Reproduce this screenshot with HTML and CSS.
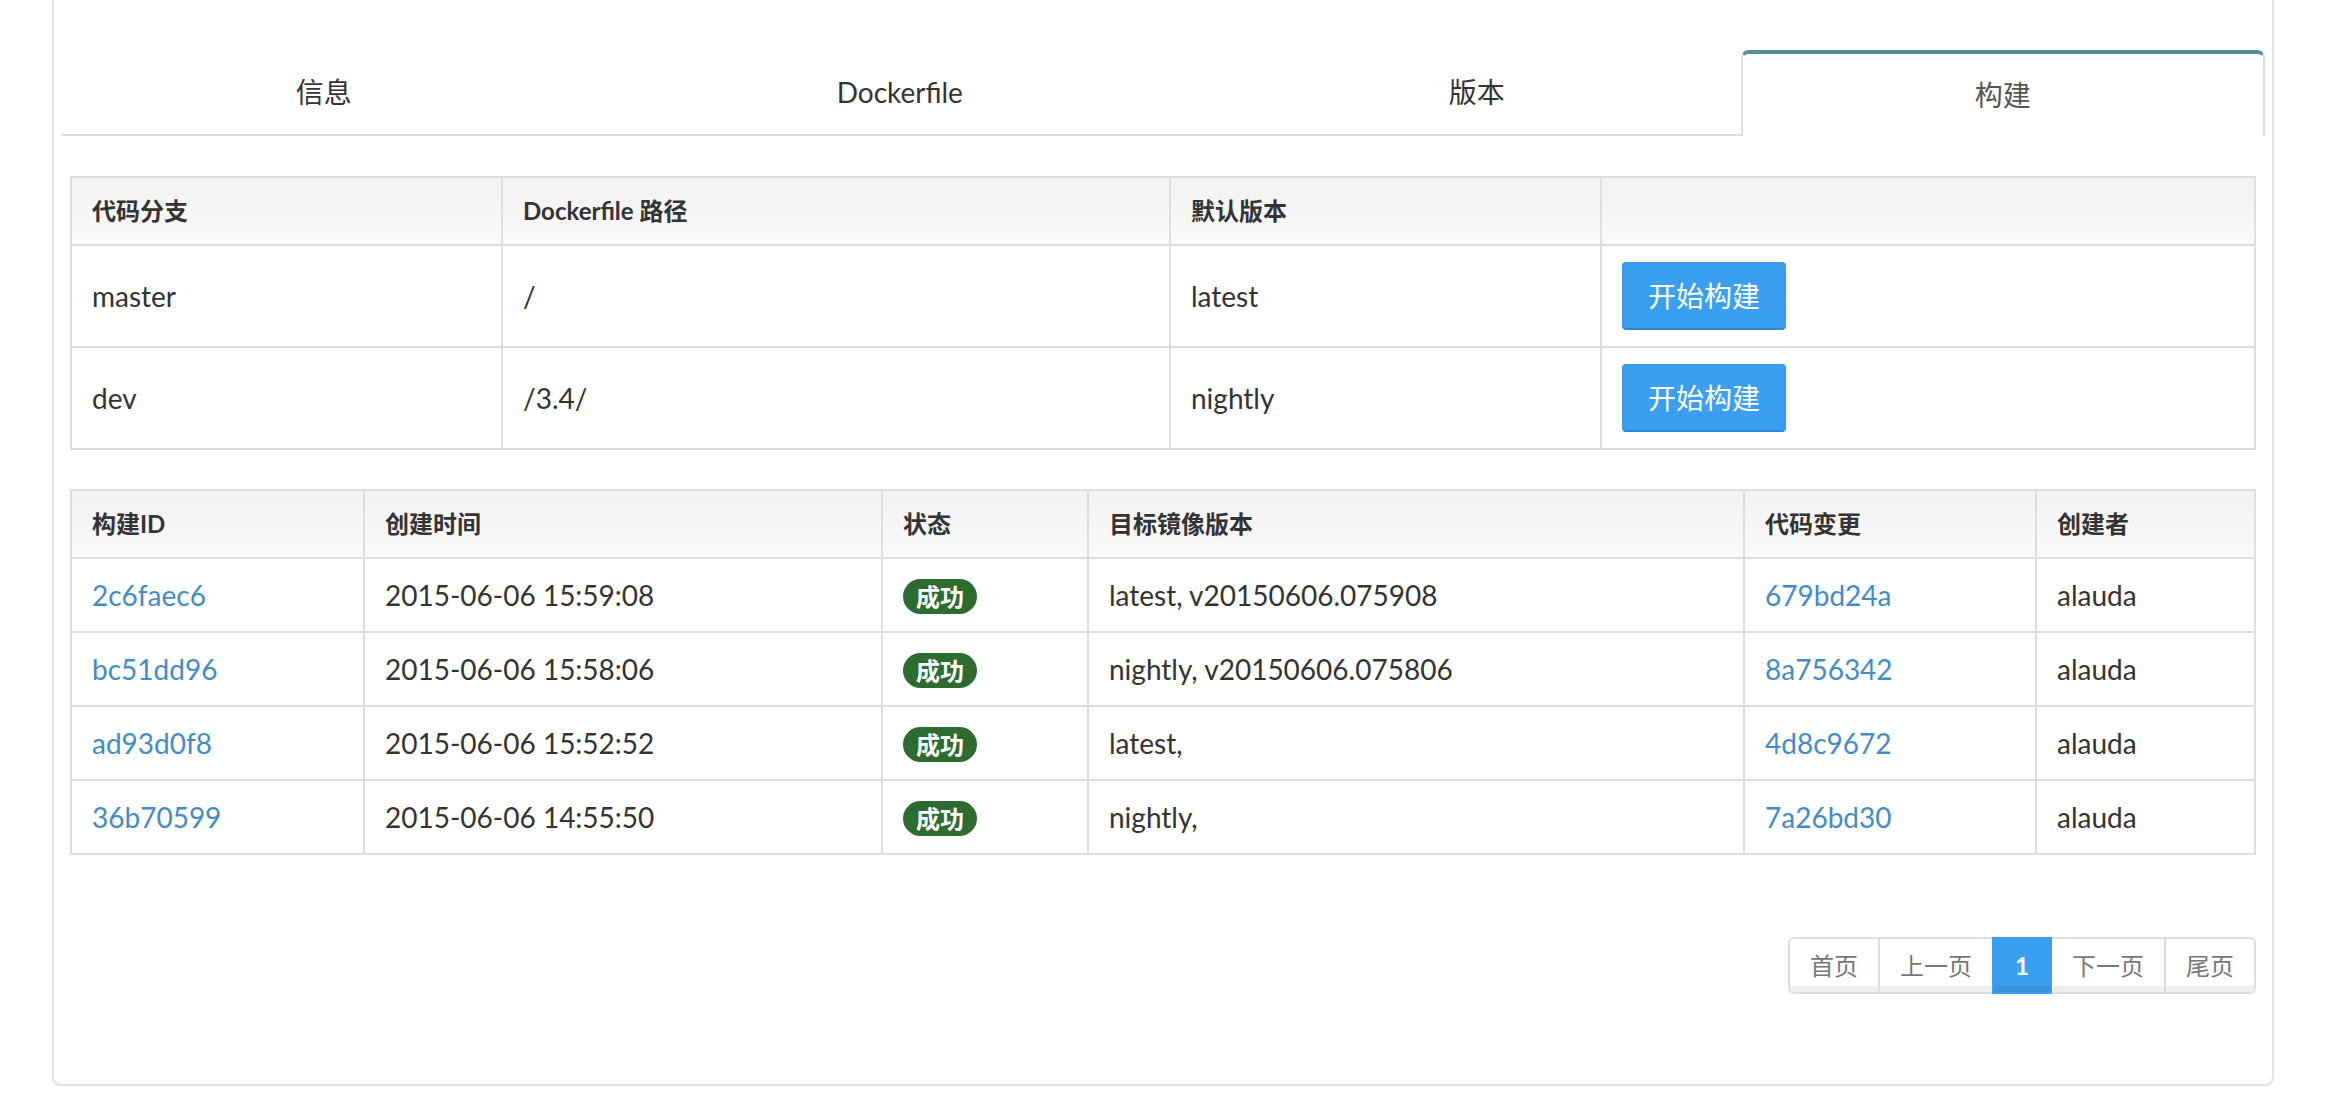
FILE: index.html
```html
<!DOCTYPE html>
<html lang="zh-CN">
<head>
<meta charset="utf-8">
<title>构建</title>
<link rel="stylesheet" href="styles.css">
</head>
<body>
<div class="card">
  <div class="tabs">
    <div class="tab">信息</div>
    <div class="tab">Dockerfile</div>
    <div class="tab">版本</div>
    <div class="tab tab-active">构建</div>
  </div>
  <div class="pane">
    <table class="tbl tbl-branches">
      <colgroup>
        <col class="c-431"><col class="c-668"><col class="c-431"><col>
      </colgroup>
      <thead>
        <tr><th>代码分支</th><th class="th-bold">Dockerfile 路径</th><th>默认版本</th><th></th></tr>
      </thead>
      <tbody>
        <tr><td>master</td><td>/</td><td>latest</td><td><button class="btn">开始构建</button></td></tr>
        <tr><td>dev</td><td>/3.4/</td><td>nightly</td><td><button class="btn">开始构建</button></td></tr>
      </tbody>
    </table>

    <table class="tbl tbl-builds">
      <colgroup>
        <col class="c-293"><col class="c-518"><col class="c-206"><col class="c-656"><col class="c-292"><col>
      </colgroup>
      <thead>
        <tr><th class="th-bold">构建ID</th><th>创建时间</th><th>状态</th><th>目标镜像版本</th><th>代码变更</th><th>创建者</th></tr>
      </thead>
      <tbody>
        <tr><td><a href="#">2c6faec6</a></td><td>2015-06-06 15:59:08</td><td><span class="badge">成功</span></td><td>latest, v20150606.075908</td><td><a href="#">679bd24a</a></td><td>alauda</td></tr>
        <tr><td><a href="#">bc51dd96</a></td><td>2015-06-06 15:58:06</td><td><span class="badge">成功</span></td><td>nightly, v20150606.075806</td><td><a href="#">8a756342</a></td><td>alauda</td></tr>
        <tr><td><a href="#">ad93d0f8</a></td><td>2015-06-06 15:52:52</td><td><span class="badge">成功</span></td><td>latest,</td><td><a href="#">4d8c9672</a></td><td>alauda</td></tr>
        <tr><td><a href="#">36b70599</a></td><td>2015-06-06 14:55:50</td><td><span class="badge">成功</span></td><td>nightly,</td><td><a href="#">7a26bd30</a></td><td>alauda</td></tr>
      </tbody>
    </table>

    <div class="pager-row">
      <ul class="pager">
        <li class="pg pg-first">首页</li>
        <li class="pg">上一页</li>
        <li class="pg pg-active">1</li>
        <li class="pg">下一页</li>
        <li class="pg pg-last">尾页</li>
      </ul>
    </div>
  </div>
</div>
</body>
</html>
```

FILE: styles.css
```css
* { box-sizing: border-box; }

html, body {
  margin: 0;
  padding: 0;
  background: #ffffff;
}

body {
  font-family: "Lato", "Noto Sans CJK SC", sans-serif;
  color: #333333;
  font-size: 28px;
  line-height: 40px;
}

.card {
  margin-left: 52px;
  width: 2222px;
  height: 1086px;
  border: 2px solid #e2e2e2;
  border-top: 0;
  border-radius: 0 0 9px 9px;
  box-shadow: 0 2px 3px rgba(0, 0, 0, 0.05);
  padding: 50px 7px 0 7px;
}

.tabs {
  display: grid;
  grid-template-columns: 525fr 626fr 527fr 524fr;
  height: 86px;
  border-bottom: 2px solid #dddddd;
}

.tab {
  display: flex;
  align-items: center;
  justify-content: center;
  font-size: 28px;
  color: #333333;
  height: 84px;
}

.tab-active {
  height: 86px;
  background: #ffffff;
  border: 2px solid #dddddd;
  border-top: 4px solid #5a8a9d;
  border-bottom: 0;
  border-radius: 8px 8px 0 0;
  color: #555555;
}

.pane {
  padding: 40px 9px 0 9px;
}

.tbl {
  width: 100%;
  border-collapse: collapse;
  table-layout: fixed;
  border: 2px solid #dddddd;
  margin-bottom: 39px;
}

.tbl th,
.tbl td {
  border: 2px solid #dddddd;
  text-align: left;
  vertical-align: middle;
  white-space: nowrap;
}

.tbl th {
  font-size: 24px;
  font-weight: 600;
  line-height: 30px;
  height: 68px;
  padding: 0 20px;
  color: #333333;
  background: linear-gradient(#f1f1f1, #f9f9f9);
}

.tbl th.th-bold {
  font-weight: 700;
}

.tbl td {
  font-size: 28px;
  line-height: 34px;
  height: 74px;
  padding: 0 20px;
}

.tbl-branches td {
  height: 102px;
}

.tbl-builds {
  margin-bottom: 82px;
}

.c-431 { width: 431px; }
.c-668 { width: 668px; }
.c-293 { width: 293px; }
.c-518 { width: 518px; }
.c-206 { width: 206px; }
.c-656 { width: 656px; }
.c-292 { width: 292px; }

.tbl a {
  color: #428bca;
  text-decoration: none;
}

.btn {
  display: block;
  font-family: "Lato", "Noto Sans CJK SC", sans-serif;
  font-size: 28px;
  line-height: 40px;
  height: 68px;
  width: 164px;
  padding: 0;
  color: #ffffff;
  background: #3b9ff1;
  border: 2px solid #3a99ea;
  border-bottom-color: #2f88d6;
  border-radius: 4px;
}

.badge {
  display: inline-block;
  height: 35px;
  line-height: 35px;
  padding: 0 13px;
  font-size: 24px;
  font-weight: 700;
  color: #ffffff;
  background: #2e6b31;
  border-radius: 18px;
  vertical-align: middle;
}

.pager-row {
  display: flex;
  justify-content: flex-end;
}

.pager {
  display: flex;
  list-style: none;
  margin: 0;
  padding: 0;
}

.pg {
  height: 57px;
  line-height: 53px;
  padding: 0 20px;
  font-size: 24px;
  color: #777777;
  background: #ffffff;
  border: 2px solid #dddddd;
  margin-left: -2px;
  box-shadow: inset 0 -6px 0 #eeeeee;
}

.pg-first {
  margin-left: 0;
  border-radius: 6px 0 0 6px;
}

.pg-last {
  border-radius: 0 6px 6px 0;
}

.pg-active {
  position: relative;
  padding: 0 21px;
  color: #ffffff;
  font-weight: 700;
  background: #3b9ff1;
  border-color: #3b9ff1;
  box-shadow: inset 0 -6px 0 #3a92de;
}
```
